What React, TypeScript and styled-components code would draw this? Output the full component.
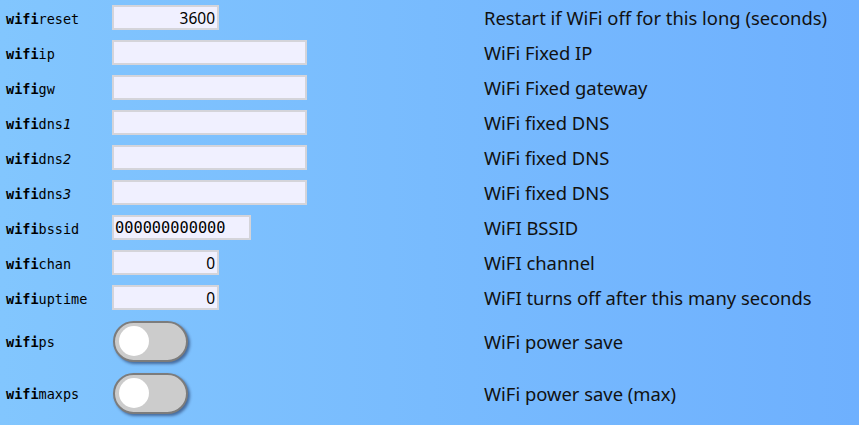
import React from "react";
import styled, { createGlobalStyle } from "styled-components";

const Global = createGlobalStyle`
  html, body { margin: 0; padding: 0; }
  body {
    width: 859px;
    height: 425px;
    overflow: hidden;
    background: linear-gradient(to right, #82c6fe, #6eb0fe);
    font-family: "Noto Sans", sans-serif;
  }
`;

const Table = styled.div`
  display: flex;
  flex-direction: column;
  padding-left: 6px;
`;

const Row = styled.div<{ $h: number }>`
  display: grid;
  grid-template-columns: 106px 372px 1fr;
  align-items: center;
  height: ${(p) => p.$h}px;
`;

const Label = styled.div`
  font-family: "DejaVu Sans Mono", monospace;
  font-size: 13.5px;
  color: #000;
  white-space: nowrap;
  padding-top: 2px;
`;

const Prefix = styled.b`
  font-weight: bold;
`;

const Input = styled.input<{ $w: number; $align?: string; $mono?: boolean }>`
  box-sizing: border-box;
  width: ${(p) => p.$w}px;
  height: 25px;
  margin: 0;
  padding: 0 2px 0 1px;
  border: 2px solid #d4d4da;
  background: #f0f0ff;
  color: #000;
  font-family: ${(p) => (p.$mono ? '"DejaVu Sans Mono", monospace' : '"Noto Sans", sans-serif')};
  font-size: ${(p) => (p.$mono ? "15.3px" : "15.5px")};
  text-align: ${(p) => p.$align || "left"};
  outline: none;
`;

const Desc = styled.div`
  font-family: "Noto Sans", sans-serif;
  font-size: 18.4px;
  color: #111;
  white-space: nowrap;
`;

const Toggle = styled.div`
  box-sizing: border-box;
  position: relative;
  width: 75px;
  height: 41px;
  border-radius: 21px;
  background: #cccccc;
  border: 2px solid #7c7c7c;
  box-shadow: 2px 2px 3px rgba(0, 0, 40, 0.45);
  margin-left: 1px;
`;

const Knob = styled.div`
  position: absolute;
  left: 4px;
  top: 3.5px;
  width: 30px;
  height: 30px;
  border-radius: 50%;
  background: #fff;
`;

type Field = {
  name: string;
  suffix: React.ReactNode;
  desc: string;
  kind: "input" | "toggle";
  w?: number;
  value?: string;
  align?: string;
  mono?: boolean;
};

const fields: Field[] = [
  { name: "reset", suffix: "reset", desc: "Restart if WiFi off for this long (seconds)", kind: "input", w: 107, value: "3600", align: "right" },
  { name: "ip", suffix: "ip", desc: "WiFi Fixed IP", kind: "input", w: 195, value: "" },
  { name: "gw", suffix: "gw", desc: "WiFi Fixed gateway", kind: "input", w: 195, value: "" },
  { name: "dns1", suffix: <>dns<i>1</i></>, desc: "WiFi fixed DNS", kind: "input", w: 195, value: "" },
  { name: "dns2", suffix: <>dns<i>2</i></>, desc: "WiFi fixed DNS", kind: "input", w: 195, value: "" },
  { name: "dns3", suffix: <>dns<i>3</i></>, desc: "WiFi fixed DNS", kind: "input", w: 195, value: "" },
  { name: "bssid", suffix: "bssid", desc: "WiFI BSSID", kind: "input", w: 139, value: "000000000000", mono: true },
  { name: "chan", suffix: "chan", desc: "WiFI channel", kind: "input", w: 107, value: "0", align: "right" },
  { name: "uptime", suffix: "uptime", desc: "WiFI turns off after this many seconds", kind: "input", w: 107, value: "0", align: "right" },
  { name: "ps", suffix: "ps", desc: "WiFi power save", kind: "toggle" },
  { name: "maxps", suffix: "maxps", desc: "WiFi power save (max)", kind: "toggle" },
];

export default function App() {
  return (
    <>
      <Global />
      <Table>
        {fields.map((f) => (
          <Row key={f.name} $h={f.kind === "toggle" ? 52 : 35}>
            <Label>
              <Prefix>wifi</Prefix>
              {f.suffix}
            </Label>
            <div>
              {f.kind === "input" ? (
                <Input $w={f.w!} $align={f.align} $mono={f.mono} defaultValue={f.value} />
              ) : (
                <Toggle>
                  <Knob />
                </Toggle>
              )}
            </div>
            <Desc>{f.desc}</Desc>
          </Row>
        ))}
      </Table>
    </>
  );
}
